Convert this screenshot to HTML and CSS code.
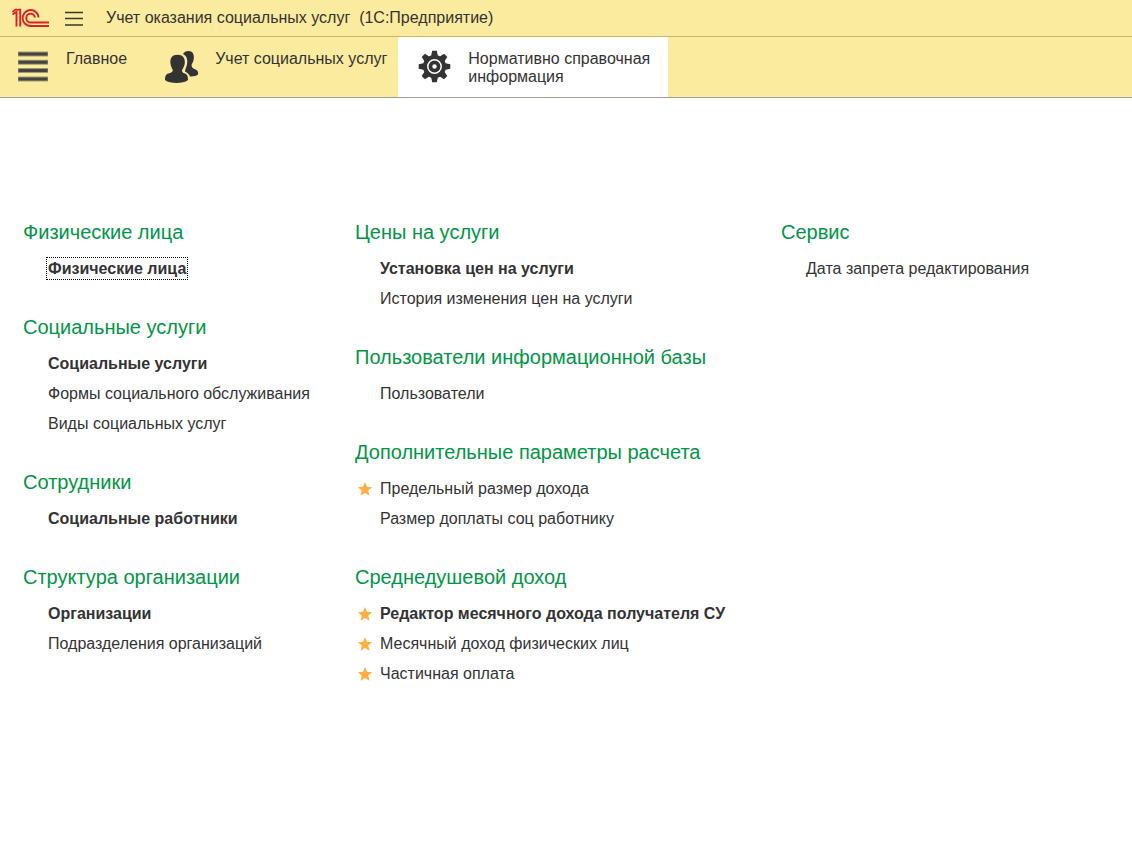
FILE: index.html
```html
<!DOCTYPE html>
<html lang="ru">
<head>
<meta charset="utf-8">
<meta name="viewport" content="width=device-width, initial-scale=1">
<title>Учет оказания социальных услуг (1С:Предприятие)</title>
<link rel="stylesheet" href="styles.css">
</head>
<body>
<svg class="defs" aria-hidden="true">
  <symbol id="star" viewBox="0 0 16 16"><path d="M8 1l2 4.800 5.200.400-4 3.400 1.300 5.100L8 12l-4.500 2.700 1.300-5.100-4-3.400L6 5.800z" fill="#fbb040"/></symbol>
</svg>
<header class="titlebar">
  <svg class="logo" viewBox="0 0 38 20" aria-label="1С" role="img">
    <g fill="none" stroke="#dc2024" stroke-width="1.900">
      <path d="M0.500 6.500L4.500 3.800V18.500"/>
      <path d="M0.500 4L3.500 1.600H8.200V18.500"/>
      <path d="M26.600 9.500A8 8 0 1 0 18.700 18H37"/>
      <path d="M23 9.500A4.400 4.400 0 1 0 18.700 14.500H37"/>
    </g>
  </svg>
  <button class="menu-button" type="button" aria-label="Главное меню">
    <svg viewBox="0 0 18 15"><path d="M0 1.500h18M0 7.500h18M0 14h18" stroke="#3a382c" stroke-width="1.400"/></svg>
  </button>
  <h1 class="app-title">Учет оказания социальных услуг&nbsp; (1С:Предприятие)</h1>
</header>
<nav class="sections">
  <button class="section section-main" type="button">
    <svg class="section-icon" viewBox="0 0 34 34">
      <path d="M0 4h30M0 12.300h30M0 20.600h30M0 29h30" stroke="#4a473c" stroke-opacity=".5" stroke-width="5"/>
      <path d="M.5 4h29M.5 12.300h29M.5 20.600h29M.5 29h29" stroke="#444" stroke-width="3"/>
    </svg>
    <span class="section-label">Главное</span>
  </button>
  <button class="section section-people" type="button">
    <svg class="section-icon" viewBox="0 0 34 34">
      <path fill="#333" d="M18 4C19 2 21 1 23.500 1c4 0 5.800 3 5.300 7.500-.300 3-1.500 4.500-2.300 6.500 0 2 1 3.200 3.500 4.200 2.500 1 3.200 2.300 3.200 5-1.500 1.700-4.500 2.300-8.200 2.200-.8-2.200-2.300-3.700-5-5 0-2.400 2.300-5.400 2.300-10C22.300 7.800 20.800 5.300 18 4z"/>
      <path fill="#333" d="M12.500 4.800c5.300 0 7.700 3.200 7.300 8.200-.300 3.200-1.800 5.300-2.800 7.300-.1 1.700.8 2.500 2.800 3.200 2.500.900 3.200 2.500 3.200 6.500-2.500 2.300-7 3-11.500 3S2.500 32.300 0 30c0-4 .8-5.600 3.500-6.500 2.200-.7 4.500-1.500 4.400-3.200-1-2-2.200-4.100-2.500-7.300-.4-5 1.800-8.200 7.100-8.200z"/>
    </svg>
    <span class="section-label">Учет социальных услуг</span>
  </button>
  <button class="section section-active" type="button" aria-current="page">
    <svg class="section-icon" viewBox="0 0 34 34">
      <g transform="translate(16.500 16.500)" fill="#333">
        <g id="teeth"><path id="tooth" d="M-3.500-10L-2.300-15.800H2.300L3.500-10V10L2.300 15.800H-2.300L-3.500 10z"/><use href="#tooth" transform="rotate(90)"/></g>
        <use href="#teeth" transform="rotate(45)"/>
        <circle r="11.500"/>
        <circle r="6.700" fill="none" stroke="#fff" stroke-width="1.500"/>
        <circle r="2.200" fill="#fff"/>
      </g>
    </svg>
    <span class="section-label">Нормативно справочная<br>информация</span>
  </button>
</nav>
<main class="commands">
  <div class="column">
    <section class="group">
      <h2 class="group-title">Физические лица</h2>
      <ul class="links">
        <li class="row"><a class="link link-bold link-focused" href="#">Физические лица</a></li>
      </ul>
    </section>
    <section class="group">
      <h2 class="group-title">Социальные услуги</h2>
      <ul class="links">
        <li class="row"><a class="link link-bold" href="#">Социальные услуги</a></li>
        <li class="row"><a class="link" href="#">Формы социального обслуживания</a></li>
        <li class="row"><a class="link" href="#">Виды социальных услуг</a></li>
      </ul>
    </section>
    <section class="group">
      <h2 class="group-title">Сотрудники</h2>
      <ul class="links">
        <li class="row"><a class="link link-bold" href="#">Социальные работники</a></li>
      </ul>
    </section>
    <section class="group">
      <h2 class="group-title">Структура организации</h2>
      <ul class="links">
        <li class="row"><a class="link link-bold" href="#">Организации</a></li>
        <li class="row"><a class="link" href="#">Подразделения организаций</a></li>
      </ul>
    </section>
  </div>
  <div class="column">
    <section class="group">
      <h2 class="group-title">Цены на услуги</h2>
      <ul class="links">
        <li class="row"><a class="link link-bold" href="#">Установка цен на услуги</a></li>
        <li class="row"><a class="link" href="#">История изменения цен на услуги</a></li>
      </ul>
    </section>
    <section class="group">
      <h2 class="group-title">Пользователи информационной базы</h2>
      <ul class="links">
        <li class="row"><a class="link" href="#">Пользователи</a></li>
      </ul>
    </section>
    <section class="group">
      <h2 class="group-title">Дополнительные параметры расчета</h2>
      <ul class="links">
        <li class="row row-starred"><svg class="star"><use href="#star"/></svg><a class="link" href="#">Предельный размер дохода</a></li>
        <li class="row"><a class="link" href="#">Размер доплаты соц работнику</a></li>
      </ul>
    </section>
    <section class="group">
      <h2 class="group-title">Среднедушевой доход</h2>
      <ul class="links">
        <li class="row row-starred"><svg class="star"><use href="#star"/></svg><a class="link link-bold" href="#">Редактор месячного дохода получателя СУ</a></li>
        <li class="row row-starred"><svg class="star"><use href="#star"/></svg><a class="link" href="#">Месячный доход физических лиц</a></li>
        <li class="row row-starred"><svg class="star"><use href="#star"/></svg><a class="link" href="#">Частичная оплата</a></li>
      </ul>
    </section>
  </div>
  <div class="column">
    <section class="group">
      <h2 class="group-title">Сервис</h2>
      <ul class="links">
        <li class="row"><a class="link" href="#">Дата запрета редактирования</a></li>
      </ul>
    </section>
  </div>
</main>
</body>
</html>
```
FILE: styles.css
```css
* {
  box-sizing: border-box;
}

body {
  margin: 0;
  background: #fff;
  color: #333;
  font: 16px/18px "Liberation Sans", Arial, sans-serif;
}

button {
  border: 0;
  padding: 0;
  background: none;
  color: inherit;
  font: inherit;
  text-align: left;
}

.defs {
  display: none;
}

.titlebar {
  display: flex;
  align-items: center;
  min-height: 37px;
  padding: 0 12px;
  background: #fbeb9e;
  border-bottom: 1px solid #c8b96a;
}

.logo {
  width: 38px;
  height: 20px;
}

.menu-button {
  display: flex;
  margin: 0 23px 0 15px;
}

.menu-button svg {
  width: 18px;
  height: 15px;
}

.app-title {
  margin: 0;
  font-size: 16px;
  font-weight: normal;
}

.sections {
  display: flex;
  min-height: 61px;
  background: #fbeb9e;
  border-bottom: 1px solid #a09c90;
}

.section {
  display: flex;
  align-items: flex-start;
  gap: 16px;
  padding: 13px 18px 10px 20px;
}

.section-main {
  gap: 14px;
  padding-left: 18px;
}

.section-people {
  padding-right: 11px;
}

.section-active {
  background: #fff;
}

.section-icon {
  width: 34px;
  height: 34px;
}

.commands {
  display: grid;
  grid-template-columns: minmax(max-content, 332fr) minmax(max-content, 426fr) minmax(max-content, 328fr);
  padding: 119px 23px 40px;
}

.column {
  display: flex;
  flex-direction: column;
  gap: 29px;
}

.group-title {
  margin: 0 0 6px;
  color: #009646;
  font-size: 20px;
  font-weight: normal;
  line-height: 30px;
}

.links {
  margin: 0;
  padding: 0;
  list-style: none;
}

.row {
  display: flex;
  align-items: center;
  height: 30px;
  padding: 1px 0 0 25px;
}

.row-starred {
  gap: 7px;
  padding-left: 2px;
}

.star {
  width: 16px;
  height: 16px;
}

.link {
  color: inherit;
  line-height: 19px;
  text-decoration: none;
  white-space: nowrap;
}

.link-bold {
  font-weight: bold;
}

.link-focused {
  outline: 1px dotted #000;
  outline-offset: 1px;
}
```
